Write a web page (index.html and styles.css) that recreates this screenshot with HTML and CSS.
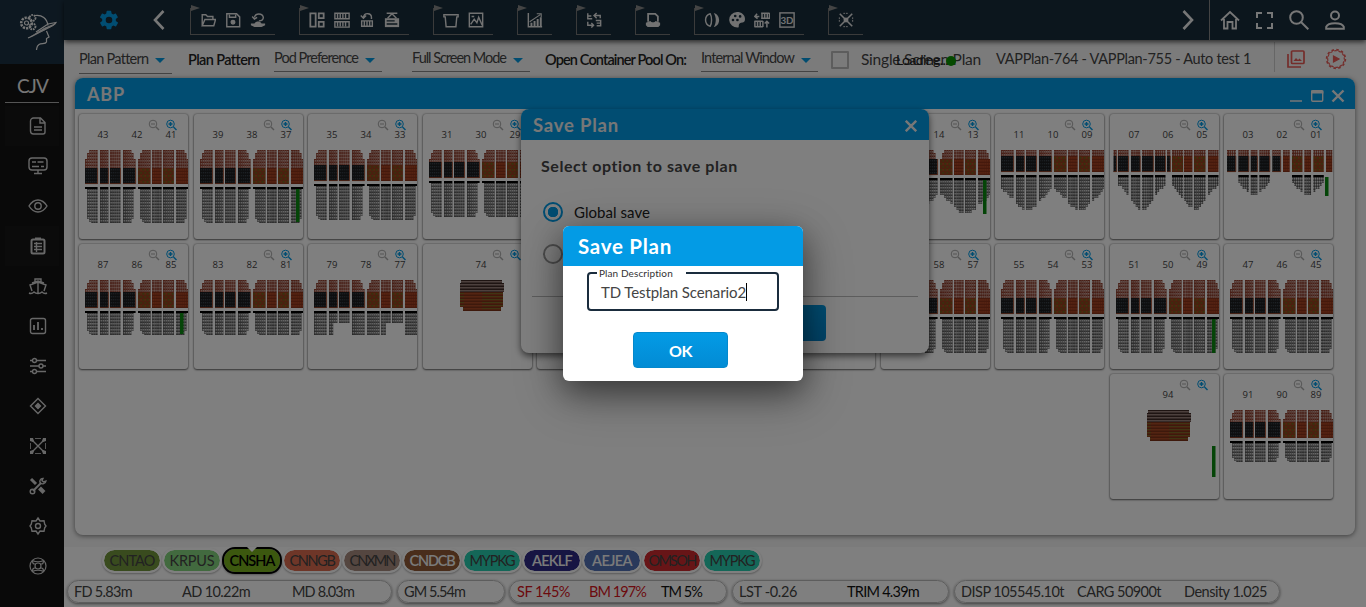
FILE: index.html
```html
<!DOCTYPE html>
<html lang="en">
<head>
<meta charset="utf-8">
<title>Save Plan</title>
<link rel="stylesheet" href="styles.css">
</head>
<body>
<svg class="defs" width="0" height="0">
  <defs>
    <pattern id="p-top" width="2.1" height="3" patternUnits="userSpaceOnUse"><rect width="2.1" height="3" fill="#903f2d"/><rect x=".6" y="1" width="1.1" height="1.6" fill="#c9aba4"/></pattern>
    <pattern id="p-top2" width="2.1" height="3" patternUnits="userSpaceOnUse"><rect width="2.1" height="3" fill="#9a5040"/><rect y="1" width="2.1" height="1.1" fill="#b88478"/></pattern>
    <pattern id="p-red" width="2.1" height="3" patternUnits="userSpaceOnUse"><rect width="2.1" height="3" fill="#8a3219"/><rect x=".5" y="1" width="1.4" height="1.7" fill="#b44b27"/></pattern>
    <pattern id="p-green" width="4.2" height="6" patternUnits="userSpaceOnUse"><rect width="4.2" height="6" fill="#95401d"/><rect x=".6" y="1" width="1.5" height="1.7" fill="#66701c"/><rect x="2.6" y="4" width="1.5" height="1.7" fill="#6e651c"/><rect x="2.6" y="1" width="1.4" height="1.6" fill="#b04a22"/></pattern>
    <pattern id="p-dark" width="2.1" height="3" patternUnits="userSpaceOnUse"><rect width="2.1" height="3" fill="#1b1c1e"/><rect x=".6" y="1" width="1" height="1.4" fill="#39424a"/></pattern>
    <pattern id="p-hold" width="2.1" height="3" patternUnits="userSpaceOnUse"><rect width="2.1" height="3" fill="#474747"/><rect x=".5" y=".8" width="1.4" height="1.8" fill="#d8d8d8"/></pattern>
    <pattern id="p-hold2" width="2.1" height="3" patternUnits="userSpaceOnUse"><rect width="2.1" height="3" fill="#606060"/><rect x=".3" y="1" width="1.6" height="1.5" fill="#bbb"/></pattern>
    <pattern id="p-stripe" width="50" height="3" patternUnits="userSpaceOnUse"><rect width="50" height="3" fill="#3c2825"/><rect y="1" width="50" height="1.5" fill="#98807a"/></pattern>
    <pattern id="p-stripe2" width="50" height="3" patternUnits="userSpaceOnUse"><rect width="50" height="3" fill="#7c3219"/><rect y="1" width="50" height="1.5" fill="#a84925"/><rect x="9" y="1" width="32" height="1" fill="#806a26"/></pattern>
  </defs>
</svg>

<div class="app">
  <aside class="side">
    <div class="brand">
      <svg width="40" height="42" viewBox="0 0 40 42" fill="none" stroke="#eee" stroke-width="1.2">
        <circle cx="8.500" cy="11" r="5.300" stroke-width="2.600" stroke-dasharray="2.200 1"/><circle cx="8.500" cy="11" r="2"/>
        <circle cx="14.500" cy="6" r="3" stroke-width="1.800" stroke-dasharray="1.700 .8"/><circle cx="14.500" cy="14.500" r="3" stroke-width="1.800" stroke-dasharray="1.700 .8"/>
        <path d="M17 3.500c7-1 12 3 13 10M28.500 19l2.500 6-2.500 1.500v3.500c-1 2.500-5 1-7.500 2.500-2.500 1.500-2 3-2.500 5.500"/>
        <path d="M10 26c5-2 10-5 18-9M18 20l12-8 8-1.500c-2 4-6 4-11 6l-10 6" />
        <path d="M10 26l16-10 12-5c-2 4-14 8-28 15z" fill="#ddd" stroke="none"/>
      </svg>
    </div>
    <div class="vessel" data-fit="31">CJV</div>
    <nav class="nav" id="nav"></nav>
  </aside>

  <div class="main">
    <header class="top">
      <svg class="gear" width="22" height="22" viewBox="0 0 24 24"><path fill="#039be5" d="M19.400 13a7.500 7.500 0 0 0 0-2l2.100-1.700a.5.5 0 0 0 .1-.6l-2-3.500a.5.5 0 0 0-.6-.2l-2.500 1a7 7 0 0 0-1.700-1l-.4-2.600a.5.5 0 0 0-.5-.4h-4a.5.5 0 0 0-.5.4L9 5a7.600 7.600 0 0 0-1.700 1l-2.500-1a.5.5 0 0 0-.6.200l-2 3.500a.5.5 0 0 0 .1.600L4.600 11a8 8 0 0 0 0 2l-2.200 1.700a.5.5 0 0 0-.1.600l2 3.500c.1.200.4.300.6.200l2.500-1a7 7 0 0 0 1.700 1l.4 2.600c0 .2.200.4.500.4h4c.2 0 .5-.2.500-.4L15 19a7.600 7.600 0 0 0 1.700-1l2.500 1c.2.100.5 0 .6-.2l2-3.500a.5.5 0 0 0-.1-.6zM12 15.600a3.600 3.600 0 1 1 0-7.200 3.600 3.600 0 0 1 0 7.200z"/></svg>
      <svg class="prev" width="12" height="20" viewBox="0 0 12 20"><path d="M10.500 1L2 10l8.500 9" fill="none" stroke="#eee" stroke-width="2.600"/></svg>
      <div class="tools" id="tools"></div>
      <svg class="next" width="12" height="20" viewBox="0 0 12 20"><path d="M1.500 1L10 10l-8.500 9" fill="none" stroke="#eee" stroke-width="2.600"/></svg>
      <div class="account">
        <svg width="20" height="20" viewBox="0 0 20 20" fill="none" stroke="#eee" stroke-width="1.800"><path d="M1 10.500L10 2l9 8.500M4 9v9.500h3.500v-6.500h5v6.500H16V9"/></svg>
        <svg width="17" height="17" viewBox="0 0 17 17" fill="none" stroke="#eee" stroke-width="2"><path d="M1 6V1h5M11 1h5v5M16 11v5h-5M6 16H1v-5"/></svg>
        <svg width="20" height="20" viewBox="0 0 20 20" fill="none" stroke="#eee" stroke-width="2"><circle cx="7.500" cy="7.500" r="6.300"/><path d="M12 12l7.300 7.300"/></svg>
        <svg width="20" height="20" viewBox="0 0 20 20" fill="none" stroke="#eee" stroke-width="2"><circle cx="10" cy="5.500" r="4"/><path d="M1.200 18.800v-2C3 12 17 12 18.800 16.800v2z"/></svg>
      </div>
    </header>

    <div class="options">
      <div class="select first"><span data-fit="69">Plan Pattern</span><i></i></div>
      <b class="strong lead" data-fit="71">Plan Pattern</b>
      <div class="select pod"><span data-fit="84">Pod Preference</span><i></i></div>
      <div class="select screen"><span data-fit="94">Full Screen Mode</span><i></i></div>
      <b class="strong pool" data-fit="141">Open Container Pool On:</b>
      <div class="select window"><span data-fit="93">Internal Window</span><i></i></div>
      <span class="check"></span>
      <div class="single"><span data-fit="120">Single Screen Plan</span><span class="loading"><em data-fit="52">Loading...</em><u></u></span></div>
      <span class="plans" data-fit="255">VAPPlan-764 - VAPPlan-755 - Auto test 1</span>
      <div class="alerts">
        <svg width="18" height="18" viewBox="0 0 18 18" fill="none" stroke="#e85a55" stroke-width="1.700"><rect x="4.500" y="1" width="12.500" height="12.500" rx="1"/><path d="M1 4v13h13"/><path d="M6.500 11l2.500-3 2 2 1.500-1.500 2.500 2.500z" fill="#e85a55" stroke="none"/></svg>
        <svg width="22" height="22" viewBox="0 0 22 22" fill="none" stroke="#e85a55" stroke-width="1.200"><circle cx="11" cy="11" r="9.300" stroke-width="1.800" stroke-dasharray="2.500 2.370"/><circle cx="11" cy="11" r="8.300" stroke-dasharray="2.600 1.745" stroke-dashoffset="-2.300"/><path d="M8.500 8l5.500 3-5.500 3z" fill="#e85a55"/></svg>
      </div>
    </div>

    <section class="panel">
      <div class="panel-head"><h1 data-fit="38">ABP</h1>
        <svg width="56" height="16" viewBox="0 0 56 16" fill="none" stroke="#eee"><path d="M1 14h12" stroke-width="1.600"/><rect x="22.700" y="3.700" width="11" height="10.500" rx="1" stroke-width="1.400"/><path d="M22 5h12.400" stroke-width="3"/><path d="M43.500 3.500l11 11m0-11l-11 11" stroke-width="2.400"/></svg>
      </div>
      <div class="bays" id="bays"></div>
    </section>

    <footer class="foot">
      <div class="ports" id="ports"></div>
      <div class="stats">
        <div class="pill p1"><span data-fit="58">FD 5.83m</span><span data-fit="68">AD 10.22m</span><span data-fit="62">MD 8.03m</span></div>
        <div class="pill p2"><span data-fit="61">GM 5.54m</span></div>
        <div class="pill p3"><span class="bad" data-fit="53">SF 145%</span><span class="bad" data-fit="57">BM 197%</span><span class="dark" data-fit="41">TM 5%</span></div>
        <div class="pill p4"><span data-fit="58">LST -0.26</span><span class="dark" data-fit="72">TRIM 4.39m</span></div>
        <div class="pill p5"><span data-fit="103">DISP 105545.10t</span><span data-fit="84">CARG 50900t</span><span data-fit="83">Density 1.025</span></div>
      </div>
    </footer>
  </div>
</div>

<div class="save-dialog">
  <div class="save-head"><span data-fit="86">Save Plan</span><svg width="12" height="12" viewBox="0 0 12 12"><path d="M.8.8l10.400 10.400M11.200.8L.8 11.200" stroke="#eee" stroke-width="2.400"/></svg></div>
  <div class="save-body">
    <h2><span data-fit="197">Select option to save plan</span></h2>
    <label class="radio on"><i></i><span data-fit="76">Global save</span></label>
    <label class="radio"><i></i></label>
    <div class="save-actions"><button></button></div>
  </div>
</div>
<div class="shade"></div>
<div class="name-dialog">
  <div class="name-head"><span data-fit="94">Save Plan</span></div>
  <div class="name-body">
    <fieldset><legend><span data-fit="74">Plan Description</span></legend><span class="value"><span data-fit="145">TD Testplan Scenario2</span></span></fieldset>
    <button class="ok"><span data-fit="23">OK</span></button>
  </div>
</div>
<script src="app.js"></script>
</body>
</html>
```
FILE: styles.css
```css
* { box-sizing: border-box; }
body { margin: 0; width: 1366px; height: 607px; overflow: hidden; font-family: "Lato", "Open Sans", sans-serif; font-size: 14.500px; color: #444; background: #f6f6f6; }
h1, h2 { margin: 0; }
svg { display: block; flex: none; }
span, em, b, h1 { white-space: nowrap; }
.defs { position: absolute; }
.app { display: flex; height: 607px; }

.side { width: 64px; background: #131313; flex: none; }
.brand { height: 64px; background: #1b3142; padding: 12px 0 0 18px; }
.brand svg { overflow: visible; }
.vessel { margin: 0 5px; height: 39px; padding-left: 12px; line-height: 44px; font-size: 19px; color: #eee; border-bottom: 1px solid #aaa; }
.nav { padding-top: 3px; }
.nav div { height: 40px; padding: 11px 0 0 29px; }
.nav svg { fill: none; stroke: #d0d0d0; stroke-width: 1.400; overflow: visible; }
.nav .tint { background: #171717; margin: 0 5px; padding-left: 24px; }

.main { flex: 1; display: flex; flex-direction: column; min-width: 0; }
.top { height: 40px; background: #182c3a; display: flex; align-items: center; box-shadow: 0 2px 5px rgba(0,0,0,.65); flex: none; z-index: 1; }
.gear { margin-left: 34px; }
.prev { margin-left: 33px; }
.tools { display: flex; gap: 24px; margin-left: 25px; flex: 1; }
.group { height: 27px; padding: 0 9px 2px 9px; border: solid #777; border-width: 0 0 1px 1px; display: flex; gap: 9px; align-items: center; position: relative; margin-top: 2px; }
.group::before { content: ""; position: absolute; left: 0; top: -3px; border: solid transparent; border-width: 3px 0 3px 9px; border-left-color: #888; }
.group svg { fill: none; stroke: #e4e4e4; stroke-width: 1.600; }
.next { margin-right: 15px; }
.account { height: 40px; width: 157px; border-left: 1px solid #888; display: flex; align-items: center; padding-left: 10px; gap: 16px; }

.options { height: 38px; display: flex; align-items: flex-start; padding: 10px 0 0 15px; flex: none; background: #f6f6f6; }
.select { height: 22px; border-bottom: 1px solid #888; display: flex; justify-content: space-between; padding-right: 7px; line-height: 16px; flex: none; }
.select i { border: solid transparent; border-width: 5px 5px 0; border-top-color: #0399e0; margin-top: 8px; }
.first { width: 93px; height: 24px; line-height: 17px; }
.pod { width: 108px; }
.screen { width: 118px; margin-left: 30px; }
.window { width: 117px; }
.strong { color: #222; line-height: 19px; font-weight: 600; }
.lead { width: 87px; padding-left: 16px; margin-right: 15px; }
.pool { width: 156px; margin-left: 15px; }
.check { width: 18px; height: 18px; border: 2px solid #bbb; border-radius: 1px; margin: 1px 12px 0 13px; flex: none; }
.single { width: 135px; font-size: 15.500px; position: relative; line-height: 19px; flex: none; }
.loading { position: absolute; left: 35px; top: 0; font-size: 14px; color: #222; }
.loading em { font-style: normal; }
.loading u { position: absolute; left: 50px; top: 6px; width: 10px; height: 10px; border-radius: 50%; background: #0a9400; }
.plans { line-height: 18px; width: 278px; flex: none; }
.alerts { display: flex; gap: 20px; border-left: 1px solid #ccc; height: 30px; margin-top: -8px; padding: 4px 0 0 12px; align-items: center; }

.panel { margin: 0 11px; height: 457px; background: #fff; border-radius: 8px; overflow: hidden; box-shadow: 0 1px 5px rgba(0,0,0,.5); flex: none; }
.panel-head { height: 31px; background: #039be5; color: #eee; display: flex; align-items: center; justify-content: space-between; padding: 0 10px 0 12px; }
.panel-head h1 { font-size: 18px; }
.panel-head svg { margin-top: 2px; }
.bays { display: grid; grid-template-columns: repeat(11, 109px); grid-auto-rows: 125px; gap: 5px 5.500px; padding: 5px 0 0 4px; }
.bay { border-radius: 3px; box-shadow: 0 0 2px rgba(0,0,0,.5), 0 1px 2px rgba(0,0,0,.5); overflow: hidden; background: #fff; }
.bay text { font-family: "Open Sans", sans-serif; font-size: 9.500px; fill: #444; text-anchor: middle; }

.foot { margin-top: 12px; background: #fff; height: 60px; padding-top: 1px; }
.ports { display: flex; padding-left: 38px; height: 25px; align-items: center; }
.port { width: 60px; height: 25px; border: 2px solid #fff; border-radius: 13px; line-height: 22px; text-align: center; background-clip: padding-box; box-shadow: 0 1px 2px rgba(0,0,0,.3); color: #444; }
.port.light { color: #f5f5f5; font-weight: 600; }
.port.sel { border: 2px solid #000; color: #000; font-weight: 600; height: 27px; position: relative; line-height: 24px; }
.port.sel::before { content: ""; position: absolute; left: 23px; top: -2px; border: solid transparent; border-width: 5px 5px 0; border-top-color: #fff; }
.stats { display: flex; padding: 7px 0 0 3px; }
.pill { height: 23px; border-radius: 12px; border: 1px solid #bbb; box-shadow: 0 1px 3px rgba(0,0,0,.5); padding: 0 7px; line-height: 22px; display: flex; flex: none; }
.pill span { flex: none; }
.bad { color: #d8141c; } .dark { color: #111; }
.p1 { width: 325px; margin-right: 5px; padding-left: 6px; } .p1 span { width: 108px; } .p1 span + span + span { margin-left: 2px; }
.p2 { width: 108px; margin-right: 4px; padding-left: 6px; }
.p3 { width: 218px; margin-right: 5px; } .p3 span { width: 72px; }
.p4 { width: 217px; margin-right: 5px; padding-left: 6px; justify-content: space-between; padding-right: 29px; }
.p5 { width: 326px; padding: 0 11px 0 6px; } .p5 span:nth-child(2) { margin: 0 23px 0 13px; }

.save-dialog { position: absolute; left: 521px; top: 109px; width: 408px; height: 244px; border-radius: 8px; overflow: hidden; background: #fff; box-shadow: 0 3px 7px rgba(0,0,0,.6); }
.save-head { height: 31px; background: #039be5; color: #eee; font-size: 18.500px; font-weight: 700; padding: 0 12px; display: flex; align-items: center; justify-content: space-between; }
.save-head svg { margin-top: 3px; }
.save-body { padding: 15px 11px 0; }
.save-body h2 { font-size: 16px; line-height: 22px; padding-left: 9px; color: #444; margin-bottom: 24px; }
.radio { display: flex; align-items: center; gap: 11px; height: 22px; margin: 0 0 20px 11px; font-size: 15px; color: #222; line-height: 20px; }
.radio i { width: 20px; height: 20px; border: 2px solid #999; border-radius: 50%; }
.radio.on i { border-color: #039be5; background: radial-gradient(circle, #039be5 5px, transparent 5.500px); }
.save-actions { border-top: 1px solid #bbb; margin-top: 31px; padding: 8px 92px 0; display: flex; justify-content: flex-end; }
.save-actions button { width: 95px; height: 36px; border: 0; border-radius: 4px; background: linear-gradient(#039be5, #0288d1); }

.shade { position: absolute; inset: 0; background: rgba(0,0,0,.5); z-index: 2; }
.name-dialog { position: absolute; z-index: 3; left: 563px; top: 226px; width: 240px; height: 155px; border-radius: 6px; overflow: hidden; background: #fff; box-shadow: 0 10px 30px rgba(0,0,0,.4), 0 14px 50px rgba(0,0,0,.3); }
.name-head { height: 40px; background: #039be5; color: #fff; font-weight: 700; font-size: 20.500px; line-height: 41px; padding-left: 15px; }
.name-body { padding: 2px 24px 0; }
.name-body fieldset { margin: 0; height: 43px; border: 2px solid #1a2c3d; border-radius: 4px; padding: 0 12px; min-width: 0; }
.name-body legend { font-size: 10px; line-height: 10px; width: 89px; padding: 0 2px; margin-left: -4px; color: #333; height: 10px; }
.value { display: inline-block; line-height: 18px; margin-top: 5px; border-right: 1px solid #000; color: #444; height: 18px; font-size: 15px; }
.ok { display: block; margin: 21px 0 0 46px; width: 95px; height: 36px; border: 1px solid #0488cc; border-radius: 4px; background: linear-gradient(#039be5, #028bd4); color: #fff; font: 700 16px "Lato", sans-serif; }
```
FILE: app.js
```js
const svg = (w, body) => `<svg width="${w}" height="${w}" viewBox="0 0 18 18">${body}</svg>`;

const navIcons = [
  '<path d="M4.500 1h7L16 5.500V15a2 2 0 0 1-2 2H4.500a3 3 0 0 1-3-3V4a3 3 0 0 1 3-3zM11 1v5h5M5 10h8M5 13h8"/>',
  '<rect x="0" y="1" width="18" height="12" rx="3"/><path d="M3 5h4M8.500 5h6M3 9.500h7M12 9.500h3M9 13v3M5 16.500h8"/>',
  '<path d="M0 9c5-8 13-8 18 0-5 8-13 8-18 0z"/><circle cx="9" cy="9" r="3.200"/>',
  '<rect x="2.500" y="2.500" width="13" height="14" rx="1.500" stroke-width="2"/><path d="M6 1.500h6" stroke-width="2"/><path d="M5 6.500h8M5 9.500h8M5 12.500h8M7.500 5v10"/>',
  '<path d="M6 5V2h6v3M3 14L1 8l8-3 8 3-2 6M9 5v11M0 16c2 1 4 0 5-1 2 2 6 2 8 0 1 1 3 2 5 1M3 6l6-2 6 2"/>',
  '<rect x="1.500" y="1.500" width="15" height="15" rx="2"/><path d="M5 13V8M9 13V5M13 13v-2" stroke-width="1.800"/>',
  '<path d="M1 3.500h2.500M7.500 3.500H17M1 9h9M14 9h3M1 14.500h2.500M7.500 14.500H17"/><circle cx="5.500" cy="3.500" r="2"/><circle cx="12" cy="9" r="2"/><circle cx="5.500" cy="14.500" r="2"/>',
  '<path d="M9 1.500L16.500 9 9 16.500 1.500 9z"/><path d="M9 6.500L11.500 9 9 11.500 6.500 9z" fill="#d0d0d0"/>',
  '<path d="M2 2l14 14M16 2L2 16"/><path d="M6 1.500h6M6 16.500h6M1.500 6v6M16.500 6v6" stroke-width=".8"/><path d="M1 1h3l1 3-1 1-3-1zM17 1h-3l-1 3 1 1 3-1zM1 17h3l1-3-1-1-3 1zM17 17h-3l-1-3 1-1 3 1z" fill="#d0d0d0" stroke="none"/>',
  '<path d="M2 2l5 5" stroke-width="3"/><path d="M10.500 11l4.500 4.500" stroke-width="4"/><path d="M4 14l8-8" stroke-width="2"/><circle cx="3.500" cy="14.500" r="2.300"/><path d="M14 1.500c-3 0-4 3-2.500 4.500S16.500 7 17 4l-2.500 1-1.500-1.500z"/>',
  '<path d="M9 1l2 3 4-.3.700 3.500L17 9l-1.300 1.800-.7 3.500-4-.3-2 3-2-3-4 .3-.7-3.500L1 9l1.300-1.800.7-3.500L7 4z"/><circle cx="9" cy="9" r="2.500"/>',
  '<g stroke-width="1.200"><circle cx="9" cy="9" r="8"/><circle cx="9" cy="9" r="3"/><path d="M3.500 3.500c0 3 1 4 3.300 3.300M14.500 3.500c0 3-1 4-3.300 3.300M3.500 14.500c0-3 1-4 3.300-3.300M14.500 14.500c0-3-1-4-3.300-3.300M3.500 3.500c3 1.500 8 1.500 11 0M3.500 14.500c3-1.500 8-1.500 11 0"/></g>'
];
document.getElementById('nav').innerHTML = navIcons.map((p, i) =>
  `<div class="${i === 0 || i === 3 ? 'tint' : ''}">${svg(18, p)}</div>`).join('');

const F = 'fill="#e4e4e4" stroke="none"';
const groups = [
  ['<path d="M2.500 15.500V3h4l2 2h6v3M2.500 15.500l3-7h12l-2 7z"/>',
   '<path d="M2 2h11l3.500 3.500v11H2zM5 3v3h7V3"/><circle cx="9" cy="11.500" r="2" fill="#e4e4e4"/>',
   `<path d="M5 6c1-5 9-5 10 0 0 3-2 4-5 4M2.500 5L5 8l3-2"/><path d="M1 13h4c2-3 6-3 8 0h4v2l-4 2H5l-4-2z" ${F}/>`],
  ['<path d="M1.500 1.500h6v15h-6zM11 1.500h5.500v5.500H11zM11 11h5.500v5.500H11z" stroke-width="2"/>',
   '<path d="M1 1.500h16v6H1zM1 11h16v6H1zM4 2v5M7 2v5M10 2v5M13 2v5M4 11v5M7 11v5M10 11v5M13 11v5"/>',
   '<path d="M3 10h12v6H3zM6 10v6M9 10v6M12 10v6M5 6c1-6 9-5 9 0v2M2 4l3 3 3-3"/>',
   `<path d="M4 7l5-5 5 5M3 1.500h12"/><path d="M1 7h16v10H1z" ${F}/><path d="M3 10h9M3 13.500h12" stroke="#182c3a"/>`],
  ['<path d="M1 3h16v2.500h-1.500l-1 11h-11l-1-11H1z"/>', '<path d="M1.500 1.500h15v15h-15zM3 14l4-6 3 4 2-6 4 9M4 5h3"/>'],
  ['<path d="M1.500 1v15.500H17" /><path d="M5 16v-4M8.500 16v-6M12 16V8M15.500 16V6" stroke-width="2.200"/><path d="M3 11l12-8M11 2h5v4" stroke-width="1.200"/>'],
  ['<path d="M2 1.500v6h5M2 4.500h4M11 9.500h5.500v6H12M2 11v4h6M6 12.500l2.500 2.500L6 17.500M9 4h7v3M12 1L9 4l3 3M12 12.500h4"/>'],
  [`<path d="M3.500 11V2h8l3 3v6" stroke-width="2"/><path d="M1 12l5-2c1 2 5 2 6 0l5 2v3l-2 2H3l-2-2z" ${F}/>`],
  [`<path d="M7 2c-7 2-7 12 0 14 2-3 2-11 0-14z"/><path d="M11 1c8 2 8 14 0 16 3-5 3-11 0-16z" ${F}/>`,
   `<path fill-rule="evenodd" ${F} d="M9 0a9 8.500 0 1 0 1 17.500c2 0 0-3 2-4.500s6 0 6-5C18 3 14 0 9 0zM3 9a1.500 1.500 0 1 0 3 0 1.500 1.500 0 1 0-3 0zM5.500 4.500a1.500 1.500 0 1 0 3 0 1.500 1.500 0 1 0-3 0zM11 5a1.500 1.500 0 1 0 3 0 1.500 1.500 0 1 0-3 0zM8 9a1.500 1.500 0 1 0 3 0 1.500 1.500 0 1 0-3 0z"/>`,
   '<path d="M8 1.500h9.500M8 7h9.500M9 1v7M12 1v7M15 1v7M17.500 1v7M.5 10.500H10M.5 16.500H10M1 10v7M4 10v7M7 10v7M10 10v7M1 5h5M3.500 2L1 5l3 2.500M14.500 17.500V11M12 13l2.500-2.500L17 13" stroke-width="1.700"/>',
   '<rect x="1" y="1" width="16" height="16"/><text x="9" y="13" font-size="11" font-weight="700" font-family="Lato" text-anchor="middle" fill="#e4e4e4" stroke="none">3D</text>'],
  ['<path d="M2 2l14 14M16 2L2 16" stroke-width="1.800"/><path d="M6 1.500h6M6 16.500h6M1.500 6v6M16.500 6v6" stroke-width="1" stroke-dasharray="2 1"/><circle cx="9" cy="9" r="2" fill="#e4e4e4"/>']
];
document.getElementById('tools').innerHTML = groups.map(g =>
  `<div class="group">${g.map(p => svg(16, p)).join('')}</div>`).join('');

// Cell stacks: [left edge, number of cell columns]
const regular = [[6, 6], [21, 4], [31, 5], [44, 6], [59, 6], [73, 4.600], [84, 5.200], [97, 6]];
const bow = [[3.500, 1.500], [8, 5], [21, 4.400], [32, 5.400], [45, 5], [57, 1.600], [62, 5.300], [74, 4], [84, 5.500], [98, 5]];
const tip = [[3, 4.200], [14.300, 5], [26.700, 3.200], [35.300, 5], [48.300, 4], [59, 3.200], [68, 5], [80.300, 3.200], [89.300, 5], [102, 3]];

const snap = v => Math.round(v / 3) * 3;

// Number of pixels of hold below the deck for one column of cells.
function holdDepth(b, x, block, c) {
  const max = b.depth;
  if (b.half) {
    const centre = x < 58 ? b.centres[0] : b.centres[1];
    const d = Math.abs(x - centre) / b.half;
    return d > 1 ? 0 : snap(b.edge + (max - b.edge) * Math.min(1, (1 - d) * 1.150));
  }
  if (b.shape === 'legs') {
    return block % 4 === 0 || block % 4 === 3 || (block % 4 === 1 && c < 2) ? max : 10;
  }
  const g = x < 58 ? 6 : 59;
  const u = (x - g) / 51, e = Math.min(u, 1 - u);
  if (e < .035) return 0;
  return e < .070 ? max - 4 : e < .110 ? max - 1 : max;
}

function drawBay(b) {
  let s = '';
  if (b.single) {
    s += '<path d="M38 36h41v3h2v9h-44v-9h1z" fill="url(#p-stripe)"/><path d="M37 48h43v15h-2v4H40v-4h-3z" fill="url(#p-stripe2)"/>';
  } else {
    const deck = b.deck, bar = deck + 3, dark = b.dark;
    (b.stacks || regular).forEach(([x, n], i) => {
      const w = n * 2.100, left = x < 57.500;
      const striped = i === 2 || i === 5;
      const cols = Math.floor(n);
      let held = false;
      for (let c = 0; c < cols; c++) {
        const cw = w / cols, cx = x + c * cw, mid = cx + cw / 2;
        const g = left ? 6 : 59, u = (mid - g) / 51;
        const e = Math.min(u, 1 - u);
        const top = b.flat ? 36 : 36 + (e < .035 ? 9 : e < .080 ? 3 : 0);
        s += `<rect x="${cx}" y="${top}" width="${cw + .05}" height="${dark - top}" fill="url(#p-top${striped ? 2 : ''})"/>`;
        const d = holdDepth(b, mid, i, c);
        if (d > 0) {
          held = true;
          s += `<rect x="${cx}" y="${bar + 2}" width="${cw + .05}" height="${d}" fill="url(#p-hold${striped ? 2 : ''})"/>`;
        }
      }
      s += `<rect x="${x}" y="${dark}" width="${w}" height="${deck - dark}" fill="url(#p-${left ? 'dark' : i % 2 ? 'red' : 'green'})"/>`;
      if (left) s += `<path d="M${x} ${deck - .4}h${w}V${dark}" fill="none" stroke="#b4502f" stroke-width=".8"/>`;
      if (held) s += `<rect x="${x}" y="${bar}" width="${w}" height="2" fill="#000"/>`;
    });
  }
  if (b.bar) s += `<rect x="${b.bar[0]}" y="${b.bar[1]}" width="3.500" height="${b.bar[2]}" fill="#0a8a10"/>`;
  const xs = b.single ? [58] : [24, 58, 92];
  b.n.forEach((t, i) => { if (t) s += `<text x="${xs[i]}" y="24">${t}</text>`; });
  const lens = (x, c, plus) => `<g fill="none" stroke="${c}"><circle cx="${x}" cy="10" r="3.800"/><path d="M${x + 3} 13l3 3" stroke-width="1.400"/><path d="M${x - 2} 10h4${plus ? `M${x} 8v4` : ''}" stroke-width="${plus ? 1.500 : 1}"/></g>`;
  s += lens(74, '#aaa') + lens(91.500, '#039be5', 1);
  return `<div class="bay" style="grid-area:${b.r}/${b.c}"><svg width="109" height="125">${s}</svg></div>`;
}

const tall = { deck: 70, dark: 54, depth: 34 };
const low = { deck: 64, dark: 48, depth: 22 };
const bays = [
  { r: 1, c: 1, n: [43, 42, 41], ...tall },
  { r: 1, c: 2, n: [39, 38, 37], ...tall, bar: [102, 75, 33] },
  { r: 1, c: 3, n: [35, 34, 33], ...tall, deck: 67, dark: 51 },
  { r: 1, c: 4, n: [31, 30, 29], ...tall, deck: 64, dark: 48 },
  { r: 1, c: 5, n: [], ...tall },
  { r: 1, c: 6, n: [], ...tall },
  { r: 1, c: 7, n: [], ...tall },
  { r: 1, c: 8, n: ['', 14, 13], deck: 61, dark: 45, half: 25.500, edge: 14, depth: 34, centres: [32, 85], bar: [102, 66, 34] },
  { r: 1, c: 9, n: [11, 10, '09'], deck: 58, dark: 42, flat: 1, half: 25.500, edge: 11, depth: 34, centres: [32, 85] },
  { r: 1, c: 10, n: ['07', '06', '05'], stacks: bow, deck: 58, dark: 42, flat: 1, half: 23.500, edge: 7, depth: 32, centres: [32, 85] },
  { r: 1, c: 11, n: ['03', '02', '01'], stacks: tip, deck: 58, dark: 42, flat: 1, half: 16.500, edge: 5, depth: 19, centres: [30, 84], bar: [101, 63, 19] },
  { r: 2, c: 1, n: [87, 86, 85], ...low, bar: [101, 69, 21] },
  { r: 2, c: 2, n: [83, 82, 81], ...low },
  { r: 2, c: 3, n: [79, 78, 77], ...low, shape: 'legs' },
  { r: 2, c: 4, n: [74], single: 1 },
  { r: 2, c: 5, n: [], ...tall },
  { r: 2, c: 6, n: [], ...tall },
  { r: 2, c: 7, n: [], ...tall },
  { r: 2, c: 8, n: ['', 58, 57], ...tall },
  { r: 2, c: 9, n: [55, 54, 53], ...tall },
  { r: 2, c: 10, n: [51, 50, 49], ...tall, bar: [102, 75, 34] },
  { r: 2, c: 11, n: [47, 46, 45], ...tall },
  { r: 3, c: 10, n: [94], single: 1, bar: [102, 72, 31] },
  { r: 3, c: 11, n: [91, 90, 89], ...low, depth: 19 }
];
document.getElementById('bays').innerHTML = bays.map(drawBay).join('');

const ports = [
  ['CNTAO', '#72963c'], ['KRPUS', '#84d47e'], ['CNSHA', '#79b01e', 'sel'], ['CNNGB', '#dd6d50'],
  ['CNXMN', '#a98c80'], ['CNDCB', '#925b36', 'light'], ['MYPKG', '#28cfb0'], ['AEKLF', '#2e2a86', 'light'],
  ['AEJEA', '#5272b6', 'light'], ['OMSOH', '#cf2a2e'], ['MYPKG', '#28cfb0']
];
document.getElementById('ports').innerHTML = ports.map(([t, c, k = '']) =>
  `<div class="port ${k}" style="background-color:${c}"><span data-fit="${t.startsWith('AE') ? 40 : t === 'OMSOH' ? 47 : 45}">${t}</span></div>`).join('');

document.querySelectorAll('[data-fit]').forEach(el => {
  const range = document.createRange();
  range.selectNodeContents(el);
  const w = range.getBoundingClientRect().width;
  el.style.letterSpacing = ((el.dataset.fit - w) / el.textContent.length).toFixed(3) + 'px';
});
```
